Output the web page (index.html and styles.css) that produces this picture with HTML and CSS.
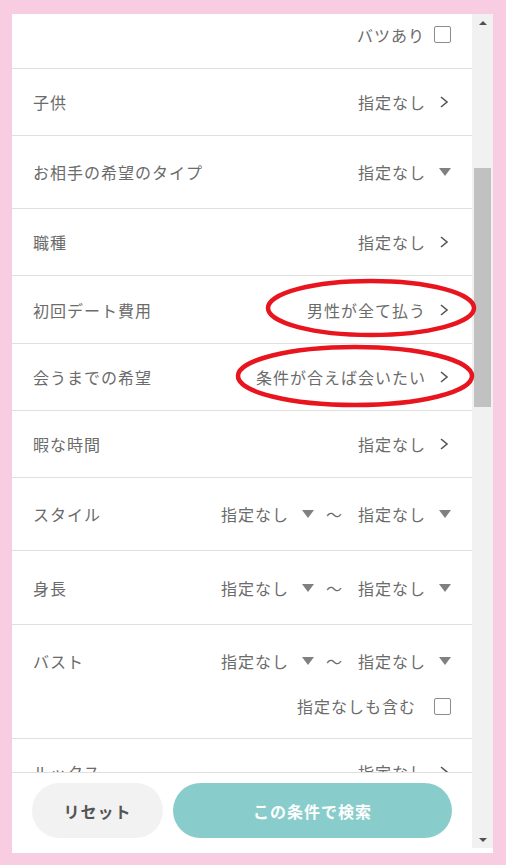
FILE: index.html
```html
<!DOCTYPE html>
<html lang="ja">
<head>
  <meta charset="UTF-8">
  <meta name="viewport" content="width=device-width, initial-scale=1.0">
  <title>検索条件</title>
  <link rel="stylesheet" href="styles.css">
</head>
<body>

<div class="panel">
  <div class="main">
    <div class="list">

      <div class="row row-top">
        <label class="check check-narrow">バツあり<span class="box"></span></label>
      </div>

      <div class="row">
        <span class="label">子供</span>
        <span class="value">指定なし<svg class="icon" viewBox="0 0 12 12"><path d="M2 1 L8 6 L2 11" /></svg></span>
      </div>

      <div class="row row-select">
        <span class="label">お相手の希望のタイプ</span>
        <span class="value">指定なし<svg class="icon" viewBox="0 0 12 12"><polygon points="0,2 12,2 6,10" /></svg></span>
      </div>

      <div class="row">
        <span class="label">職種</span>
        <span class="value">指定なし<svg class="icon" viewBox="0 0 12 12"><path d="M2 1 L8 6 L2 11" /></svg></span>
      </div>

      <div class="row row-tall">
        <span class="label">初回デート費用</span>
        <span class="value">男性が全て払う<svg class="icon" viewBox="0 0 12 12"><path d="M2 1 L8 6 L2 11" /></svg></span>
      </div>

      <div class="row">
        <span class="label">会うまでの希望</span>
        <span class="value">条件が合えば会いたい<svg class="icon" viewBox="0 0 12 12"><path d="M2 1 L8 6 L2 11" /></svg></span>
      </div>

      <div class="row">
        <span class="label">暇な時間</span>
        <span class="value">指定なし<svg class="icon" viewBox="0 0 12 12"><path d="M2 1 L8 6 L2 11" /></svg></span>
      </div>

      <div class="row row-select">
        <span class="label">スタイル</span>
        <span class="value">
          指定なし<svg class="icon" viewBox="0 0 12 12"><polygon points="0,2 12,2 6,10" /></svg>
          <span class="tilde">〜</span>
          指定なし<svg class="icon" viewBox="0 0 12 12"><polygon points="0,2 12,2 6,10" /></svg>
        </span>
      </div>

      <div class="row row-select row-tall">
        <span class="label">身長</span>
        <span class="value">
          指定なし<svg class="icon" viewBox="0 0 12 12"><polygon points="0,2 12,2 6,10" /></svg>
          <span class="tilde">〜</span>
          指定なし<svg class="icon" viewBox="0 0 12 12"><polygon points="0,2 12,2 6,10" /></svg>
        </span>
      </div>

      <div class="row row-multi">
        <div class="line">
          <span class="label">バスト</span>
          <span class="value">
            指定なし<svg class="icon" viewBox="0 0 12 12"><polygon points="0,2 12,2 6,10" /></svg>
            <span class="tilde">〜</span>
            指定なし<svg class="icon" viewBox="0 0 12 12"><polygon points="0,2 12,2 6,10" /></svg>
          </span>
        </div>
        <div class="line line-check">
          <label class="check">指定なしも含む<span class="box"></span></label>
        </div>
      </div>

      <div class="row">
        <span class="label">ルックス</span>
        <span class="value">指定なし<svg class="icon" viewBox="0 0 12 12"><path d="M2 1 L8 6 L2 11" /></svg></span>
      </div>

    </div>

    <div class="footer">
      <button class="btn btn-reset">リセット</button>
      <button class="btn btn-search">この条件で検索</button>
    </div>
  </div>

  <div class="scrollbar">
    <div class="arrow"><svg viewBox="0 0 8 4"><polygon points="0,4 8,4 4,0" /></svg></div>
    <div class="track"><div class="thumb"></div></div>
    <div class="arrow"><svg viewBox="0 0 8 4"><polygon points="0,0 8,0 4,4" /></svg></div>
  </div>

  <!-- red hand-drawn marks over the two values -->
  <svg class="marks" viewBox="0 0 481 839">
    <ellipse cx="359" cy="294" rx="103" ry="27" />
    <ellipse cx="343" cy="362" rx="117" ry="29" />
  </svg>
</div>

</body>
</html>
```

FILE: styles.css
```css
body {
  margin: 0;
  padding: 14px 13px 12px 12px;
  background-color: #f8cde1; /* pink frame */
  font-family: "Noto Sans CJK JP", "Noto Sans", sans-serif;
  color: #6b6b6b;
}

.panel {
  position: relative;
  display: flex;
  width: 481px;
  height: 839px;
  background-color: #fff;
}

.main {
  display: flex;
  flex-direction: column;
  width: 460px;
}

.list {
  flex: 1;
  overflow: hidden;
}

.row {
  display: flex;
  align-items: center;
  justify-content: space-between;
  height: 66px;
  padding: 0 21px;
  border-bottom: 1px solid #e0e0e0;
  font-size: 16px;
  letter-spacing: 1px;
  line-height: 1;
}

.row-top {
  height: 55px;
  align-items: flex-start;
  justify-content: flex-end;
  padding-top: 12px;
  box-sizing: border-box;
}

.row-select {
  height: 72px;
}

.row-tall {
  height: 67px;
}

.row-select.row-tall {
  height: 73px;
}

.row-multi {
  flex-direction: column;
  align-items: stretch;
  height: auto;
  padding-bottom: 23px;
}

.line {
  display: flex;
  align-items: center;
  justify-content: space-between;
  height: 72px;
}

.line-check {
  justify-content: flex-end;
  height: 18px;
}

.value {
  display: flex;
  align-items: center;
}

.icon {
  width: 12px;
  height: 12px;
  margin-left: 13px;
}

.icon path {
  fill: none;
  stroke: #555;
  stroke-width: 1.6;
}

.icon polygon {
  fill: #808080;
}

.tilde {
  margin: 0 16px 0 12px;
  letter-spacing: 0;
}

.check {
  display: flex;
  align-items: center;
}

.box {
  width: 15px;
  height: 15px;
  margin-left: 18px;
  border: 1px solid #8c8c8c;
  border-radius: 2px;
}

.check-narrow .box {
  margin-left: 9px;
}

.footer {
  display: flex;
  gap: 10px;
  padding: 10px 20px 15px;
  border-top: 1px solid #e0e0e0;
  background-color: #fff;
}

.btn {
  height: 55px;
  border: none;
  border-radius: 28px;
  font-family: inherit;
  font-size: 16px;
  font-weight: bold;
  letter-spacing: 1px;
  cursor: pointer;
}

.btn-reset {
  width: 131px;
  background-color: #f2f2f2;
  color: #555;
}

.btn-search {
  flex: 1;
  background-color: #88cdcb;
  color: #fff;
}

.scrollbar {
  display: flex;
  flex-direction: column;
  width: 21px;
  height: 834px;
  background-color: #f1f1f1;
}

.arrow {
  display: flex;
  align-items: center;
  justify-content: center;
  height: 17px;
}

.arrow svg {
  width: 8px;
  height: 4px;
  fill: #505050;
}

.track {
  flex: 1;
}

.thumb {
  height: 239px;
  margin: 137px 2px 0;
  background-color: #c1c1c1;
}

.marks {
  position: absolute;
  left: 0;
  top: 0;
  width: 481px;
  height: 839px;
  pointer-events: none;
}

.marks ellipse {
  fill: none;
  stroke: #e8151f;
  stroke-width: 4.5;
}
```
